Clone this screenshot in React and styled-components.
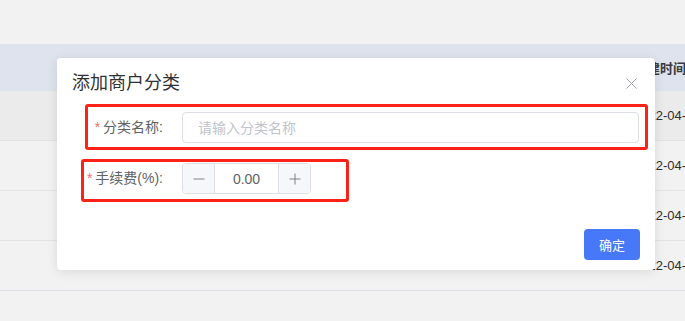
import React from "react";
import styled, { createGlobalStyle } from "styled-components";

const GlobalStyle = createGlobalStyle`
  html, body {
    margin: 0;
    padding: 0;
    background: #f2f2f2;
  }
  body {
    font-family: "Liberation Sans", "Noto Sans CJK SC", sans-serif;
    font-size: 14px;
  }
`;

const rows = [
  "2022-04-18 10:23:45",
  "2022-04-18 10:20:11",
  "2022-04-17 16:42:08",
  "2022-04-15 09:05:33",
];

const App = () => {
  return (
    <Page>
      <GlobalStyle />
      <Table>
        <HeaderRow>
          <Cell />
          <HeadCell>创建时间</HeadCell>
        </HeaderRow>
        {rows.map((date, i) => (
          <BodyRow key={date} $active={i === 0}>
            <Cell />
            <DateCell>{date}</DateCell>
          </BodyRow>
        ))}
      </Table>

      <Modal>
        <ModalHeader>
          <Title>添加商户分类</Title>
          <CloseButton aria-label="close">
            <svg width="11" height="11" viewBox="0 0 11 11">
              <path d="M0.5 0.5 L10.5 10.5 M10.5 0.5 L0.5 10.5" stroke="#a0a3aa" strokeWidth="1" fill="none" />
            </svg>
          </CloseButton>
        </ModalHeader>

        <ModalBody>
          <FormItem>
            <Highlight $top={-8} $left={13} $right={-9} $bottom={-7} />
            <Label><Star>*</Star>分类名称:</Label>
            <TextInput placeholder="请输入分类名称" />
          </FormItem>

          <FormItem $gap={20}>
            <Highlight $top={-4} $left={9} $width={268} $bottom={-8} />
            <Label><Star>*</Star>手续费(%):</Label>
            <Stepper>
              <StepButton aria-label="decrease">
                <svg width="12" height="12" viewBox="0 0 12 12">
                  <path d="M0.5 6 H11.5" stroke="#7d8087" strokeWidth="1" />
                </svg>
              </StepButton>
              <StepValue>0.00</StepValue>
              <StepButton $right aria-label="increase">
                <svg width="12" height="12" viewBox="0 0 12 12">
                  <path d="M0.5 6 H11.5 M6 0.5 V11.5" stroke="#7d8087" strokeWidth="1" />
                </svg>
              </StepButton>
            </Stepper>
          </FormItem>
        </ModalBody>

        <ModalFooter>
          <PrimaryButton>确定</PrimaryButton>
        </ModalFooter>
      </Modal>
    </Page>
  );
};

export default App;

const Page = styled.div`
  position: relative;
  width: 685px;
  height: 321px;
  overflow: hidden;
  background: #f2f2f2;
  padding-top: 44px;
  box-sizing: border-box;
`;

const Table = styled.div`
  display: flex;
  flex-direction: column;
  width: 100%;
  border-bottom: 1px solid #dcdfea;
`;

const HeaderRow = styled.div`
  display: grid;
  grid-template-columns: 634px 1fr;
  height: 47px;
  align-items: center;
  background: #dee3ee;
`;

const BodyRow = styled.div`
  display: grid;
  grid-template-columns: 634px 1fr;
  height: 49px;
  align-items: center;
  background: ${(p) => (p.$active ? "#ebebeb" : "#f2f2f2")};
  border-bottom: 1px solid #e3e3e3;

  &:last-child {
    border-bottom: none;
  }
`;

const Cell = styled.div``;

const HeadCell = styled.div`
  white-space: nowrap;
  overflow: hidden;
  color: #3a3a3a;
  font-weight: bold;
  font-size: 13px;
`;

const DateCell = styled.div`
  white-space: nowrap;
  overflow: hidden;
  color: #2f2f2f;
  font-size: 13px;
`;

const Modal = styled.div`
  position: absolute;
  z-index: 10;
  left: 57px;
  top: 58px;
  width: 598px;
  height: 212px;
  background: #fff;
  border-radius: 4px;
  box-shadow: 0 2px 12px rgba(0, 0, 0, 0.1);
  display: flex;
  flex-direction: column;
`;

const ModalHeader = styled.div`
  display: flex;
  align-items: center;
  justify-content: space-between;
  padding: 13px 17px 0 15px;
`;

const Title = styled.div`
  font-size: 18px;
  line-height: 24px;
  color: #303133;
`;

const CloseButton = styled.button`
  display: flex;
  align-items: center;
  justify-content: center;
  width: 14px;
  height: 14px;
  padding: 0;
  border: none;
  background: transparent;
  cursor: pointer;
`;

const ModalBody = styled.div`
  display: flex;
  flex-direction: column;
  padding: 17px 16px 0 15px;
`;

const FormItem = styled.div`
  position: relative;
  display: flex;
  align-items: center;
  margin-top: ${(p) => p.$gap || 0}px;
  height: 31px;
`;

const Highlight = styled.div`
  position: absolute;
  top: ${(p) => p.$top}px;
  left: ${(p) => p.$left}px;
  bottom: ${(p) => p.$bottom}px;
  ${(p) => (p.$width ? `width: ${p.$width}px;` : `right: ${p.$right}px;`)}
  border: 3px solid #fb2318;
  border-radius: 3px;
  box-sizing: border-box;
  pointer-events: none;
`;

const Label = styled.label`
  flex: none;
  width: 110px;
  box-sizing: border-box;
  padding-right: 19px;
  text-align: right;
  font-size: 14px;
  line-height: 31px;
  color: #606266;
  white-space: nowrap;
`;

const Star = styled.span`
  color: #f56c6c;
  margin-right: 3px;
`;

const TextInput = styled.input`
  flex: 1;
  height: 31px;
  box-sizing: border-box;
  border: 1px solid #dcdfe6;
  border-radius: 4px;
  padding: 0 15px;
  font-family: inherit;
  font-size: 14px;
  color: #606266;
  outline: none;

  &::placeholder {
    color: #c0c4cc;
  }
`;

const Stepper = styled.div`
  display: flex;
  width: 129px;
  height: 31px;
  box-sizing: border-box;
  border: 1px solid #dcdfe6;
  border-radius: 4px;
  overflow: hidden;
`;

const StepButton = styled.button`
  flex: none;
  width: 32px;
  height: 100%;
  padding: 0;
  display: flex;
  align-items: center;
  justify-content: center;
  background: #f5f7fa;
  border: none;
  ${(p) => (p.$right ? "border-left: 1px solid #dcdfe6;" : "border-right: 1px solid #dcdfe6;")}
  cursor: pointer;
`;

const StepValue = styled.div`
  flex: 1;
  display: flex;
  align-items: center;
  justify-content: center;
  font-size: 14px;
  color: #606266;
`;

const ModalFooter = styled.div`
  display: flex;
  justify-content: flex-end;
  padding: 35px 15px 10px;
`;

const PrimaryButton = styled.button`
  width: 56px;
  height: 31px;
  padding: 0;
  border: none;
  border-radius: 4px;
  background: #4678f7;
  color: #fff;
  font-family: inherit;
  font-size: 13px;
  cursor: pointer;
`;
